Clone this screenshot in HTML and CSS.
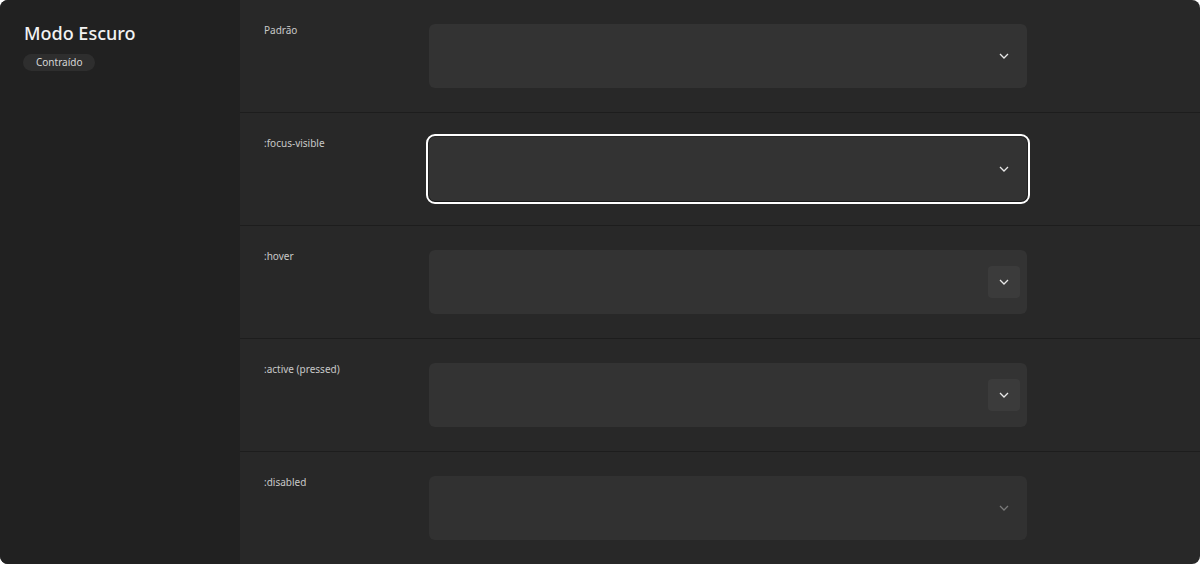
FILE: index.html
```html
<!DOCTYPE html>
<html lang="pt">
<head>
<meta charset="utf-8">
<link rel="stylesheet" href="styles.css">
</head>
<body>
<div class="frame">
  <aside class="sidebar">
    <h1 class="title">Modo Escuro</h1>
    <span class="badge">Contraído</span>
  </aside>
  <main class="main">
    <section class="row">
      <div class="label">Padrão</div>
      <div class="select">
        <span class="chev"><svg width="10" height="6" viewBox="0 0 10 6"><path d="M1 1l4 4 4-4" fill="none" stroke="currentColor" stroke-width="1.3"/></svg></span>
      </div>
    </section>
    <section class="row">
      <div class="label">:focus-visible</div>
      <div class="select focus">
        <span class="chev"><svg width="10" height="6" viewBox="0 0 10 6"><path d="M1 1l4 4 4-4" fill="none" stroke="currentColor" stroke-width="1.3"/></svg></span>
      </div>
    </section>
    <section class="row">
      <div class="label">:hover</div>
      <div class="select">
        <span class="chev boxed"><svg width="10" height="6" viewBox="0 0 10 6"><path d="M1 1l4 4 4-4" fill="none" stroke="currentColor" stroke-width="1.3"/></svg></span>
      </div>
    </section>
    <section class="row">
      <div class="label">:active (pressed)</div>
      <div class="select">
        <span class="chev boxed"><svg width="10" height="6" viewBox="0 0 10 6"><path d="M1 1l4 4 4-4" fill="none" stroke="currentColor" stroke-width="1.3"/></svg></span>
      </div>
    </section>
    <section class="row">
      <div class="label">:disabled</div>
      <div class="select disabled">
        <span class="chev"><svg width="10" height="6" viewBox="0 0 10 6"><path d="M1 1l4 4 4-4" fill="none" stroke="currentColor" stroke-width="1.3"/></svg></span>
      </div>
    </section>
  </main>
</div>
</body>
</html>
```
FILE: styles.css
```css
* { box-sizing: border-box; }
html, body { margin: 0; padding: 0; background: #ffffff; }
body {
  font-family: "Noto Sans", "Open Sans", sans-serif;
  width: 1200px;
  height: 564px;
  overflow: hidden;
}
.frame {
  display: flex;
  width: 1200px;
  height: 564px;
  border-radius: 8px;
  overflow: hidden;
  background: #282828;
}
.sidebar {
  width: 240px;
  flex: none;
  background: #212121;
  padding: 21px 24px;
  display: flex;
  flex-direction: column;
  align-items: flex-start;
}
.title {
  margin: 0;
  font-size: 18px;
  font-weight: 500;
  line-height: 24px;
  color: #f2f2f2;
}
.badge {
  margin-top: 9px;
  margin-left: -1px;
  background: #2e2e2e;
  color: #d6d6d6;
  font-size: 10px;
  line-height: 17px;
  padding: 0 13px;
  border-radius: 9px;
}
.main {
  flex: 1;
  display: flex;
  flex-direction: column;
}
.row {
  display: flex;
  align-items: flex-start;
  padding: 24px;
  border-bottom: 1px solid #1d1d1d;
}
.row:last-child { border-bottom: none; }
.label {
  width: 165px;
  flex: none;
  font-size: 10px;
  line-height: 12px;
  color: #c9c9c9;
}
.select {
  width: 598px;
  height: 64px;
  background: #333333;
  border-radius: 6px;
  display: flex;
  align-items: center;
  justify-content: flex-end;
  padding-right: 7px;
  color: #e8e8e8;
}
.select.focus {
  outline: 2px solid #ffffff;
  outline-offset: 1px;
  box-shadow: 0 1px 2px rgba(0, 0, 0, 0.5);
}
.select.disabled { color: #7a7a7a; background: #313131; }
.chev {
  width: 32px;
  height: 32px;
  display: flex;
  align-items: center;
  justify-content: center;
  border-radius: 4px;
}
.chev svg { display: block; }
.chev.boxed { background: #3b3b3b; }
```
